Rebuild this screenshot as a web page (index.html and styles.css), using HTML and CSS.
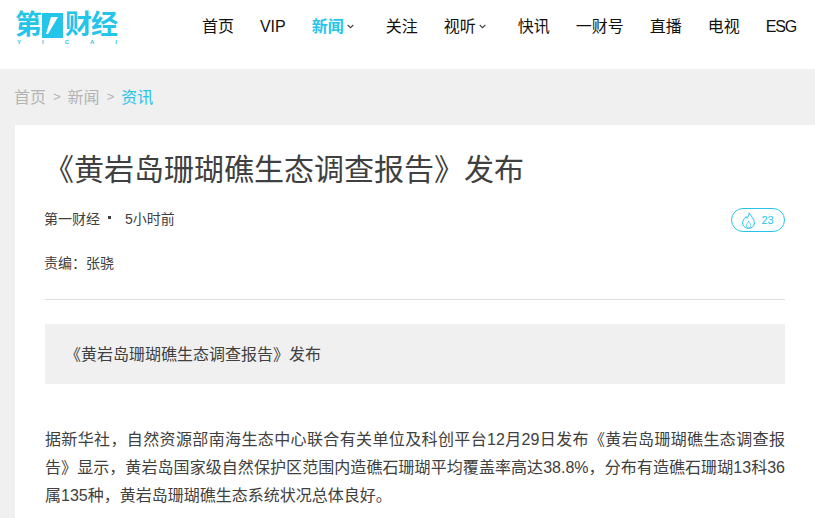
FILE: index.html
```html
<!DOCTYPE html>
<html lang="zh-CN">
<head>
    <meta charset="UTF-8">
    <title>《黄岩岛珊瑚礁生态调查报告》发布</title>
    <link rel="stylesheet" href="styles.css">
</head>
<body>
    <header class="topbar">
        <a class="logo" href="#">
            <span class="logo-name">
                <span>第</span>
                <svg class="logo-mark" width="21" height="25" viewBox="0 0 21 25"><path fill="#25c5ea" d="M0 0h21v25H0z"/><path fill="#fff" d="M4 21 9 4h7L6 21z"/></svg>
                <span>财经</span>
            </span>
            <span class="logo-sub"><span>Y</span><span>I</span><span>C</span><span>A</span><span>I</span></span>
        </a>
        <nav class="nav">
            <a href="#">首页</a>
            <a href="#">VIP</a>
            <a class="active drop" href="#">新闻<svg width="7" height="5" viewBox="0 0 7 5"><path d="M.7 1 3.500 3.600 6.300 1" fill="none" stroke="#444" stroke-width="1.200"/></svg></a>
            <a href="#">关注</a>
            <a class="drop" href="#">视听<svg width="7" height="5" viewBox="0 0 7 5"><path d="M.7 1 3.500 3.600 6.300 1" fill="none" stroke="#444" stroke-width="1.200"/></svg></a>
            <a href="#">快讯</a>
            <a href="#">一财号</a>
            <a href="#">直播</a>
            <a href="#">电视</a>
            <a class="latin" href="#">ESG</a>
        </nav>
    </header>

    <main class="page">
        <div class="crumbs">
            <a href="#">首页</a><i>&gt;</i><a href="#">新闻</a><i>&gt;</i><a class="current" href="#">资讯</a>
        </div>
        <article class="card">
            <h1>《黄岩岛珊瑚礁生态调查报告》发布</h1>
            <div class="meta">
                <div class="source"><span>第一财经</span><b class="dot"></b><span>5小时前</span></div>
                <button class="like">
                    <svg width="13" height="17" viewBox="0 0 13 17"><path d="M7 .8C7.400 3.600 5.800 4.800 5 6.400 4.500 5.800 4.300 5.200 4.300 4.500 2.200 6.200.6 8.400.6 11c0 3.200 2.600 5.300 5.900 5.300s5.900-2.100 5.900-5.300C12.400 7.200 9.200 4.200 7 .8Z" fill="none" stroke="#25c5ea"/><path d="M6.500 9.200C6.300 10.800 4.300 11.500 4.300 13.500c0 1.500 1 2.600 2.200 2.600s2.200-1.100 2.200-2.600c0-1.700-1.400-2.800-2.200-4.300Z" fill="none" stroke="#25c5ea" stroke-width=".8"/></svg>
                    <span>23</span>
                </button>
            </div>
            <p class="editor">责编：张骁</p>
            <hr class="rule">
            <p class="summary">《黄岩岛珊瑚礁生态调查报告》发布</p>
            <p class="body-text">据新华社，自然资源部南海生态中心联合有关单位及科创平台12月29日发布《黄岩岛珊瑚礁生态调查报告》显示，黄岩岛国家级自然保护区范围内造礁石珊瑚平均覆盖率高达38.8%，分布有造礁石珊瑚13科36属135种，黄岩岛珊瑚礁生态系统状况总体良好。</p>
        </article>
    </main>
</body>
</html>
```

FILE: styles.css
```css
html, body {
    margin: 0;
    padding: 0;
    height: 518px;
    overflow: hidden;
}
body {
    font-family: "Liberation Sans", "Noto Sans CJK SC", sans-serif;
    background: #f0f0f0;
    color: #404040;
}
a {
    color: inherit;
    text-decoration: none;
}
.topbar {
    height: 69px;
    background: #fff;
    display: flex;
    justify-content: space-between;
    padding: 0 19px 0 15px;
    box-sizing: border-box;
}
.logo {
    width: 104px;
    padding-top: 13px;
    color: #25c5ea;
}
.logo-name {
    display: flex;
    align-items: center;
    height: 25px;
    font-size: 27px;
    line-height: 25px;
    font-weight: 700;
    white-space: nowrap;
}
.logo-mark {
    flex: none;
    margin: 0 2px 0 0;
}
.logo-name span:last-child {
    letter-spacing: -1px;
}
.logo-sub {
    display: flex;
    justify-content: space-between;
    width: 100px;
    padding-left: 2px;
    margin-top: 2px;
    font-size: 6px;
    font-weight: 700;
    line-height: 5px;
}
.nav {
    display: flex;
    align-items: baseline;
    padding-top: 17px;
    font-size: 16px;
    line-height: 20px;
    color: #111;
}
.nav a {
    margin-left: 26px;
    white-space: nowrap;
}
.nav a.drop {
    margin-right: 6px;
}
.nav a.latin {
    letter-spacing: -1.2px;
}
.nav a svg {
    margin-left: 3px;
    vertical-align: 3px;
}
.nav a.active {
    color: #25c5ea;
    font-weight: 700;
}
.page {
    padding: 0 30px 0 15px;
}
.crumbs {
    height: 56px;
    padding-bottom: 2px;
    box-sizing: border-box;
    margin-left: -1px;
    display: flex;
    align-items: center;
    font-size: 16px;
    color: #b4b4b4;
}
.crumbs i {
    font-style: normal;
    font-size: 13px;
    margin: 0 7px;
}
.crumbs .current {
    color: #25c5ea;
}
.card {
    background: #fff;
    padding: 23px 30px 0;
    margin-right: -30px;
    height: 393px;
    box-sizing: border-box;
}
.card h1 {
    margin: 0 0 0 -1px;
    font-size: 30px;
    line-height: 44px;
    font-weight: 400;
    color: #404040;
}
.meta {
    display: flex;
    justify-content: space-between;
    align-items: center;
    margin-top: 16px;
    height: 24px;
}
.source {
    font-size: 14px;
    line-height: 20px;
    margin: -3px 0 0 -1px;
    display: flex;
    align-items: center;
}
.dot {
    width: 3px;
    height: 3px;
    background: #404040;
    margin: -3px 14px 0 8px;
}
.like {
    width: 54px;
    height: 24px;
    padding: 0;
    box-sizing: border-box;
    border: 1px solid #25c5ea;
    border-radius: 12px;
    background: #fff;
    color: #25c5ea;
    font: 11px "Liberation Sans", sans-serif;
    display: flex;
    align-items: center;
    justify-content: center;
    gap: 6px;
}
.editor {
    margin: 21px 0 0 -1px;
    font-size: 14px;
    line-height: 20px;
}
.rule {
    margin: 26px 0 0;
    border: 0;
    border-top: 1px solid #ddd;
}
.summary {
    margin: 24px 0 0;
    height: 60px;
    line-height: 61px;
    padding-left: 20px;
    background: #f0f0f0;
    font-size: 16px;
}
.body-text {
    margin: 42px 0 0;
    font-size: 16px;
    line-height: 28px;
    color: #404040;
    text-align: justify;
}
```
